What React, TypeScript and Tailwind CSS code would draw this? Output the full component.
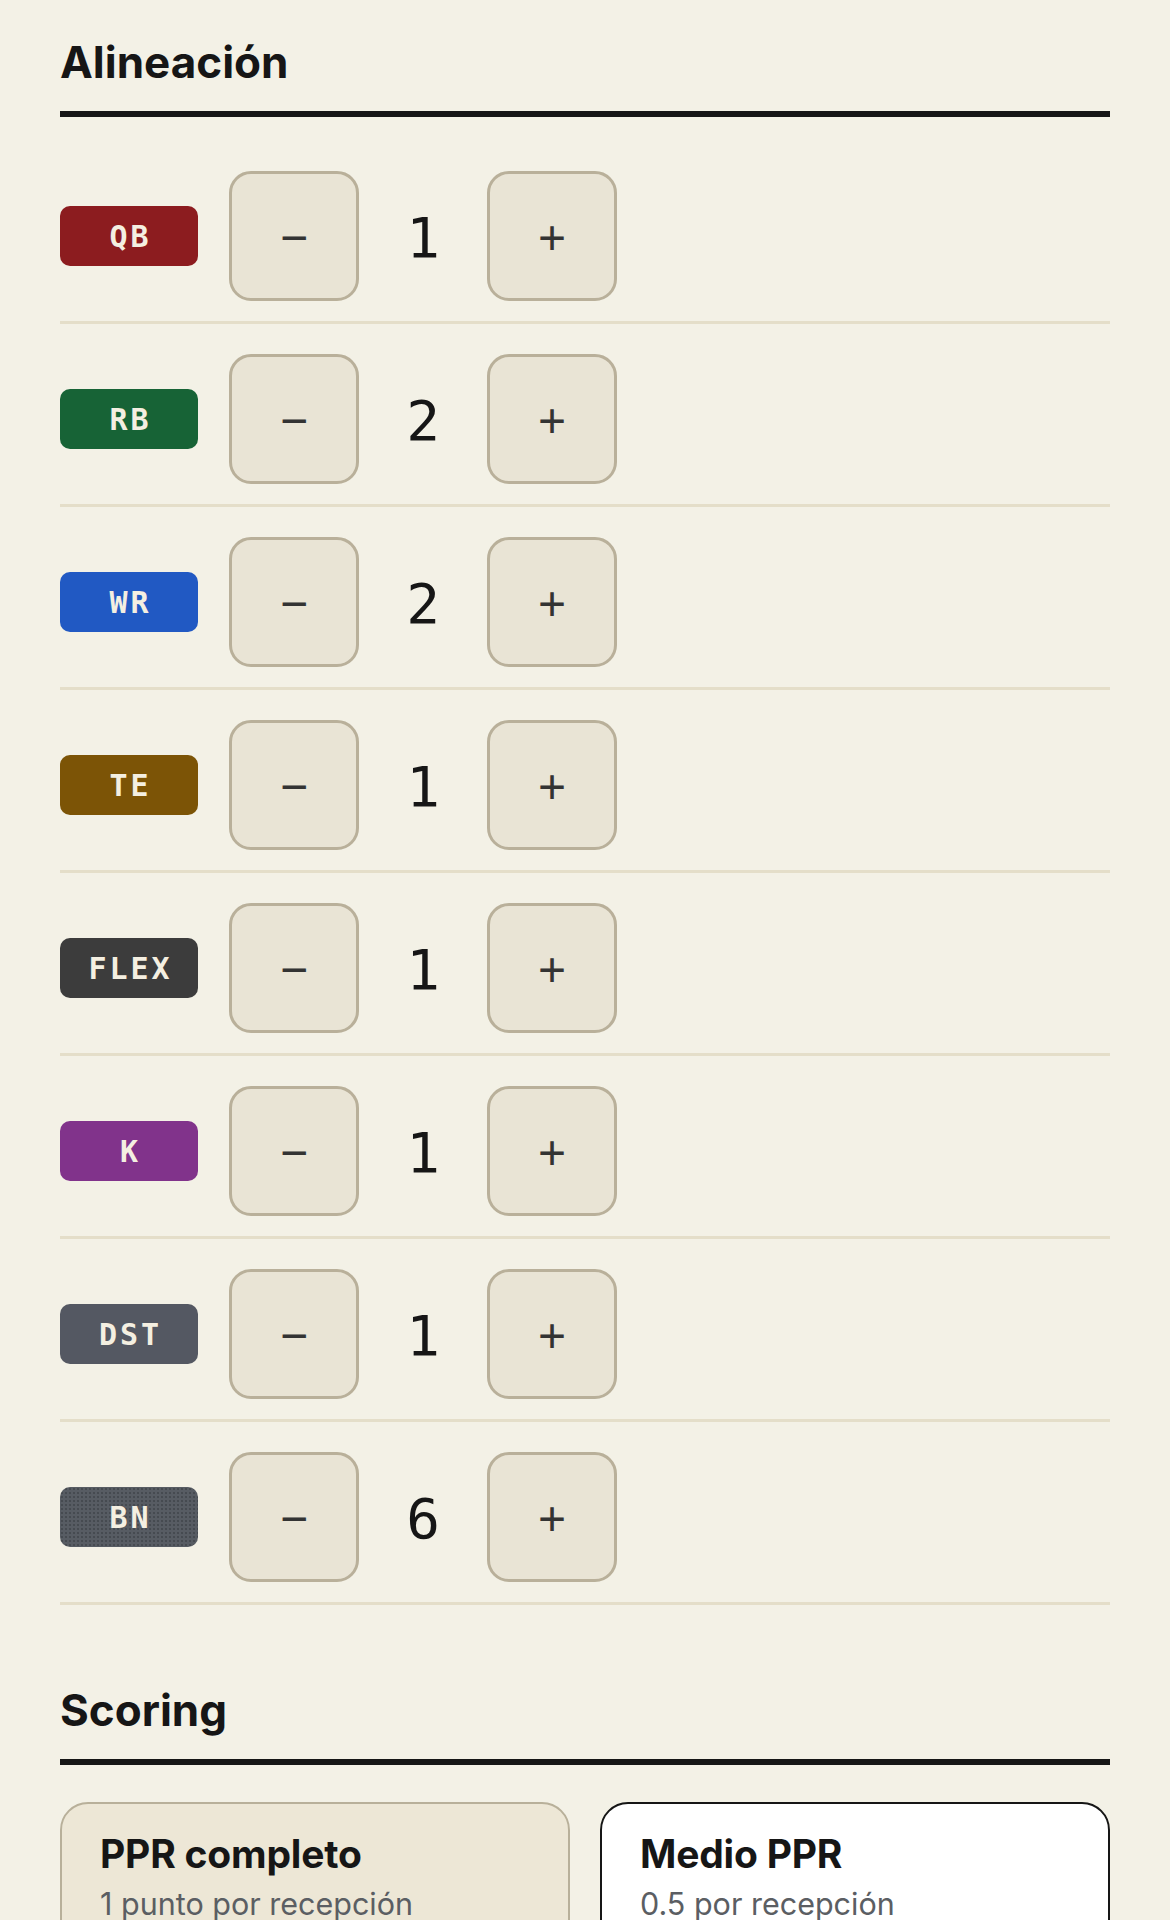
import React, { useState } from 'react';

type Slot = { pos: string; count: number; badge: string };

const INITIAL: Slot[] = [
  { pos: 'QB', count: 1, badge: 'bg-[#8c1c1f]' },
  { pos: 'RB', count: 2, badge: 'bg-[#176336]' },
  { pos: 'WR', count: 2, badge: 'bg-[#2159c3]' },
  { pos: 'TE', count: 1, badge: 'bg-[#7c5406]' },
  { pos: 'FLEX', count: 1, badge: 'bg-[#3c3c3c]' },
  { pos: 'K', count: 1, badge: 'bg-[#81338b]' },
  { pos: 'DST', count: 1, badge: 'bg-[#545862]' },
  {
    pos: 'BN',
    count: 6,
    badge:
      'bg-[#575c63] bg-[radial-gradient(circle,rgba(30,32,36,0.4)_0.6px,transparent_1px)] bg-[length:4px_4px]',
  },
];

const SCORING = [
  { id: 'ppr', title: 'PPR completo', sub: '1 punto por recepción' },
  { id: 'half', title: 'Medio PPR', sub: '0.5 por recepción' },
];

const SectionTitle = ({ children }: { children: React.ReactNode }) => (
  <h2 className="text-[44px] font-bold leading-none text-[#161616] pb-[27px] border-b-[6px] border-[#161616]">
    {children}
  </h2>
);

const StepBtn = ({ label, onClick }: { label: string; onClick: () => void }) => (
  <button
    onClick={onClick}
    className="w-[130px] h-[130px] shrink-0 rounded-[22px] border-[3px] border-[#b9b09a] bg-[#e9e4d5] flex items-center justify-center pt-1 text-[48px] leading-none text-[#333333] font-['Liberation_Sans',Arial,sans-serif]"
  >
    {label}
  </button>
);

export default function App() {
  const [slots, setSlots] = useState<Slot[]>(INITIAL);
  const [scoring, setScoring] = useState('half');

  const bump = (i: number, d: number) =>
    setSlots(slots.map((s, j) => (j === i ? { ...s, count: Math.max(0, s.count + d) } : s)));

  return (
    <div className="h-screen overflow-hidden bg-[#f3f1e6] px-[60px] pt-10 font-['Inter','Liberation_Sans',sans-serif]">
      <section>
        <SectionTitle>Alineación</SectionTitle>
        <ul className="mt-[34px] flex flex-col gap-[10px]">
          {slots.map((s, i) => (
            <li key={s.pos} className="flex items-center py-5 border-b-[3px] border-[#e4dec9]">
              <span
                className={`w-[138px] h-[60px] shrink-0 rounded-[10px] flex items-center justify-center pl-[3px] text-[30px] font-bold tracking-[0.1em] text-[#f4efe1] font-['DejaVu_Sans_Mono',monospace] ${s.badge}`}
              >
                {s.pos}
              </span>
              <div className="ml-[31px] flex items-center">
                <StepBtn label="−" onClick={() => bump(i, -1)} />
                <span className="w-[128px] pt-[4px] text-center text-[56px] leading-none text-[#161616] font-['DejaVu_Sans_Mono',monospace]">
                  {s.count}
                </span>
                <StepBtn label="+" onClick={() => bump(i, 1)} />
              </div>
            </li>
          ))}
        </ul>
      </section>

      <section className="mt-[83px]">
        <SectionTitle>Scoring</SectionTitle>
        <div className="mt-[37px] grid grid-cols-2 gap-[30px]">
          {SCORING.map((opt) => {
            const active = scoring === opt.id;
            return (
              <button
                key={opt.id}
                onClick={() => setScoring(opt.id)}
                className={`text-left rounded-[28px] border-2 px-[38px] pt-[30px] pb-[40px] ${
                  active ? 'bg-white border-[#161616]' : 'bg-[#ede7d6] border-[#b8b09a]'
                }`}
              >
                <div className="text-[39px] font-bold leading-none tracking-[-0.005em] text-[#161616]">{opt.title}</div>
                <div className="mt-[16px] text-[30.5px] leading-none text-[#5b5e63]">{opt.sub}</div>
              </button>
            );
          })}
        </div>
      </section>
    </div>
  );
}
